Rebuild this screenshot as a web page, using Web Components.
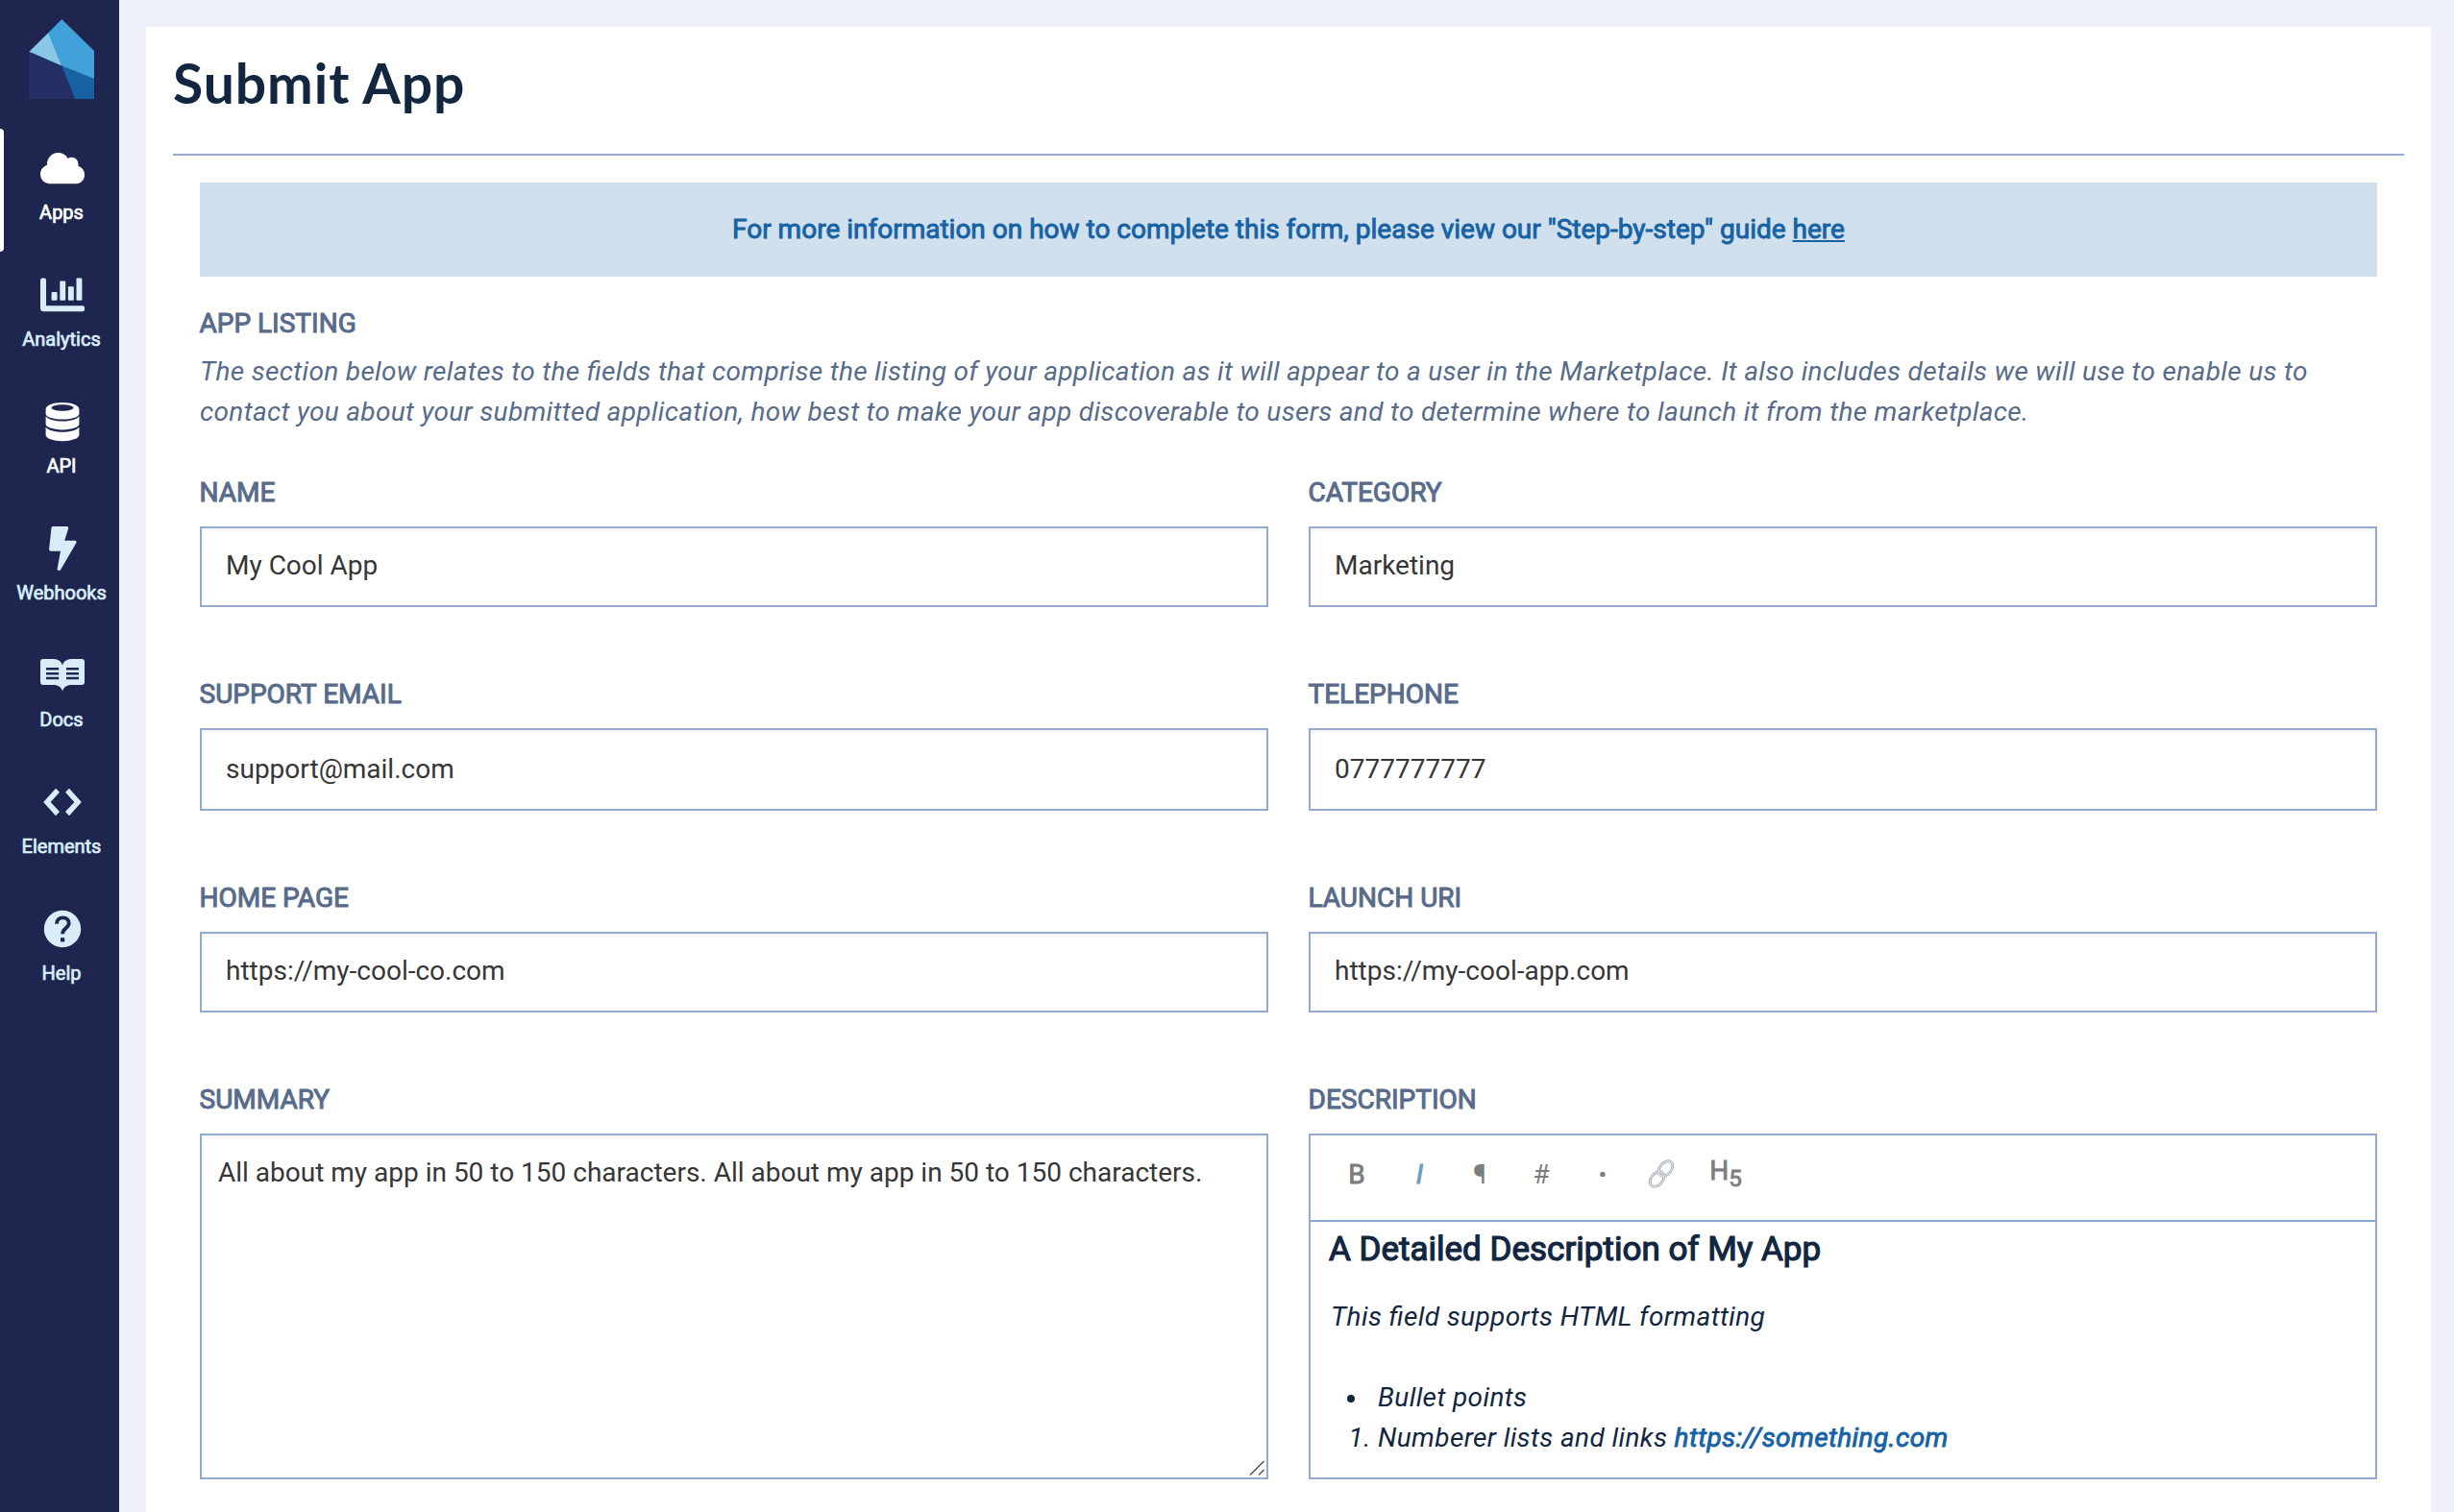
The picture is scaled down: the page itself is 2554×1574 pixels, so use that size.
<!DOCTYPE html>
<html lang="en">
<head>
<meta charset="utf-8">
<title>Submit App</title>
<style>
  html, body { margin: 0; height: 100%; }
  body { background: #eef1fa; font-family: Roboto, "Liberation Sans", sans-serif; font-size: 28px; line-height: 42px; color: #12263f; overflow: hidden; }
</style>
</head>
<body>
<app-shell>
  <side-nav slot="nav">
    <nav-item icon="cloud" active>Apps</nav-item>
    <nav-item icon="chart">Analytics</nav-item>
    <nav-item icon="database" bright>API</nav-item>
    <nav-item icon="bolt">Webhooks</nav-item>
    <nav-item icon="book">Docs</nav-item>
    <nav-item icon="code">Elements</nav-item>
    <nav-item icon="help">Help</nav-item>
  </side-nav>
  <page-panel heading="Submit App">
    <info-banner>For more information on how to complete this form, please view our "Step-by-step" guide <u>here</u></info-banner>
    <form-section heading="App Listing">
      <span slot="intro">The section below relates to the fields that comprise the listing of your application as it will appear to a user in the Marketplace. It also includes details we will use to enable us to contact you about your submitted application, how best to make your app discoverable to users and to determine where to launch it from the marketplace.</span>
      <form-field label="Name">My Cool App</form-field>
      <form-field label="Category">Marketing</form-field>
      <form-field label="Support Email" tall>support@mail.com</form-field>
      <form-field label="Telephone" tall>0777777777</form-field>
      <form-field label="Home Page">https://my-cool-co.com</form-field>
      <form-field label="Launch URI">https://my-cool-app.com</form-field>
      <form-field label="Summary" multiline>All about my app in 50 to 150 characters. All about my app in 50 to 150 characters.</form-field>
      <rich-editor label="Description"></rich-editor>
    </form-section>
  </page-panel>
</app-shell>

<script>
const define = (name, html, setup) => {
  const template = document.createElement('template');
  template.innerHTML = html;
  customElements.define(name, class extends HTMLElement {
    constructor() {
      super();
      this.attachShadow({ mode: 'open' }).append(template.content.cloneNode(true));
    }
    connectedCallback() { if (setup) setup(this, this.shadowRoot); }
  });
};

const icons = {
  cloud: '<path d="M10 40.2a9.5 9.5 0 0 1-9-9.7c0-4.600 2.600-8 6.900-9.400C7.700 14 12.500 8 19.500 8c4.600 0 8.300 2.400 10.200 6.100 1-.9 2.300-1.400 3.800-1.400 4.300 0 7 3.300 7 7.200v2.200c4 1.200 6.500 4.600 6.500 8.800 0 5.200-3.900 9.300-8.500 9.300z"/>',
  chart: '<path d="M1 8.600a2 2 0 0 1 2-2h2a2 2 0 0 1 2 2V35.300H45a2 2 0 0 1 2 2v2a2 2 0 0 1-2 2H4.500A3.500 3.500 0 0 1 1 37.800z"/><rect x="12.600" y="21" width="6" height="8.700" rx="1"/><rect x="21.300" y="9.400" width="5.900" height="20.300" rx="1"/><rect x="29.900" y="15.200" width="5.900" height="14.500" rx="1"/><rect x="38.500" y="6.600" width="5.900" height="23.100" rx="1"/>',
  database: '<path fill-rule="evenodd" d="M6.600 11C6.600 6.800 14.400 4 24 4s17.400 2.800 17.400 7v5c0 3-7.800 5.600-17.400 5.600S6.600 19 6.600 16zM24 6.300c-6.400 0-11.500 1.400-11.500 3.200S17.600 12.700 24 12.700 35.500 11.300 35.500 9.500 30.400 6.300 24 6.300z"/><path d="M6.600 18.600c3.400 3.600 9.800 5 17.400 5s14-1.400 17.400-5v8c0 3.200-7.800 5.800-17.400 5.800S6.600 29.800 6.600 26.600z"/><path d="M6.600 29.800c3.400 3.600 9.800 5 17.400 5s14-1.400 17.400-5v8c0 3.700-7.800 6.400-17.400 6.400S6.600 41.500 6.600 37.800z"/>',
  bolt: '<path d="M12.500 2.600C12.700 1.400 13.300 1 14.500 1h14c1.300 0 2 1 1.600 2.200L26.200 15.700h10.600c1.500 0 2.300 1.200 1.500 2.600L22.300 45.700c-.5.900-1.200 1.300-2 1.300-1.100 0-1.900-1-1.600-2.300l3.300-18H12c-1.300 0-2.100-.9-1.900-2.200z"/>',
  book: '<path fill-rule="evenodd" d="M24 13.500C22.700 8.500 18.500 6.900 13 6.900H4A3 3 0 0 0 1 9.900V31a3 3 0 0 0 3 3H13.500C19 34 22.500 35.500 24 40.500 25.500 35.500 29 34 34.500 34H44a3 3 0 0 0 3-3V9.900a3 3 0 0 0-3-3H35C29.500 6.900 25.300 8.500 24 13.500zM7 16h13.200v2.500H7zM7 20.900h13.200v2.500H7zM7 25.800h13.200v2.500H7zM28 16h13v2.500H28zM28 20.900h13v2.500H28zM28 25.800h13v2.500H28z"/>',
  code: '<path d="M17 9.700 4.200 24 17 38.200l4-4.100L11.600 24 21 13.800zM31 9.700 43.800 24 31 38.200l-4-4.100L36.400 24 27 13.800z"/>',
  help: '<circle cx="24" cy="24" r="19.200"/><path d="M18 18.700c0-4.300 2.900-6.400 6.400-6.400 3.700 0 6.300 2.200 6.300 5.700 0 5.200-6.600 5.400-6.600 11.200" fill="none" stroke="#1e2650" stroke-width="3.800"/><rect x="22" y="33.200" width="4.200" height="4.200" fill="#1e2650"/>'
};

define('app-shell', `
  <style>
    :host { display: flex; height: 100vh; }
    main { flex: 1; min-width: 0; padding: 28px 24px 0 28px; display: flex; }
  </style>
  <slot name="nav"></slot>
  <main><slot></slot></main>`);

define('side-nav', `
  <style>
    :host { display: flex; flex-direction: column; flex: none; width: 124px; background: #1e2650; }
    .logo { display: block; width: 68px; height: 84px; margin: 20px 0 28px 30px; }
  </style>
  <svg class="logo" viewBox="0 0 68 84">
    <path fill="#242f66" d="M0 33.500 34.300 48.400 48.300 83H0z"/>
    <path fill="#1762a3" d="M34.300 48.400 68 62v21H48.300z"/>
    <path fill="#41a2da" d="M34.300 0 68 33v29L34.300 48.400 20.400 14z"/>
    <path fill="#88c7e6" d="M20.400 14 34.300 48.400 .4 33.800z"/>
  </svg>
  <slot></slot>`);

define('nav-item', `
  <style>
    :host { display: flex; flex-direction: column; height: 132px; box-sizing: border-box; color: #d9edf8; border-left: 4px solid transparent; padding-top: 19px; align-items: center; font-size: 20px; line-height: 30px; -webkit-text-stroke: .7px; position: relative; }
    :host([active]), :host([bright]) { color: #fff; }
    :host([active])::before { content: ""; position: absolute; left: -4px; top: 2px; width: 4px; height: 128px; background: #fff; border-radius: 0 4px 4px 0; }
    svg { width: 48px; height: 48px; fill: currentColor; -webkit-text-stroke: 0; margin-left: 2px; flex: none; }
    span { margin-top: 7px; }
  </style>
  <svg viewBox="0 0 48 48"></svg>
  <span><slot></slot></span>`,
  (host, root) => { root.querySelector('svg').innerHTML = icons[host.getAttribute('icon')]; });

define('page-panel', `
  <style>
    :host { display: block; flex: 1; min-width: 0; background: #fff; padding: 0 28px; }
    h1 { margin: 0; height: 132px; box-sizing: border-box; font: 700 57px/68px Lato, "Liberation Sans", sans-serif; letter-spacing: .95px; padding-top: 24px; }
    .body { border-top: 2px solid #97aacb; padding: 28px; }
  </style>
  <h1></h1>
  <div class="body"><slot></slot></div>`,
  (host, root) => { root.querySelector('h1').textContent = host.getAttribute('heading'); });

define('info-banner', `
  <style>
    :host { display: block; padding: 28px; background: #d0e0ec; color: #1762a5; text-align: center; -webkit-text-stroke: .9px; margin-bottom: 28px; }
  </style>
  <slot></slot>`);

define('form-section', `
  <style>
    :host { display: block; }
    h2 { margin: 0 0 8px -.5px; font: inherit; color: #586b8a; text-transform: uppercase; -webkit-text-stroke: 1px; }
    p { margin: 0 0 42px; font-style: italic; letter-spacing: .325px; font-feature-settings: "liga" 1; color: #586b8a; }
    .grid { display: grid; grid-template-columns: 1fr 1fr; column-gap: 42px; row-gap: 70px; }
  </style>
  <h2></h2>
  <p><slot name="intro"></slot></p>
  <div class="grid"><slot></slot></div>`,
  (host, root) => { root.querySelector('h2').textContent = host.getAttribute('heading'); });

define('form-field', `
  <style>
    :host { display: block; }
    label { display: block; margin: 0 0 14px -.5px; color: #586b8a; text-transform: uppercase; -webkit-text-stroke: 1px; }
    .box { display: flow-root; position: relative; box-sizing: border-box; height: 84px; border: 2px solid #97aacb; padding: 18px 25px; color: #363636; box-shadow: inset 0 2px 4px rgba(10,10,10,.06); }
    :host([tall]) .box { height: 86px; padding-top: 20px; }
    :host([multiline]) .box { height: 360px; padding: 18px 17px; }
    svg { display: none; position: absolute; right: 1px; bottom: 1px; width: 18px; height: 18px; }
    :host([multiline]) svg { display: block; }
  </style>
  <label></label>
  <div class="box"><slot></slot><svg viewBox="0 0 18 18"><path d="M2 16.500 16.500 2M11 16.500 16.500 11" stroke="#555" stroke-width="1.500" fill="none"/></svg></div>`,
  (host, root) => { root.querySelector('label').textContent = host.getAttribute('label'); });

define('rich-editor', `
  <style>
    :host { display: block; }
    label { display: block; margin: 0 0 14px -.5px; color: #586b8a; text-transform: uppercase; -webkit-text-stroke: 1px; }
    .editor { box-sizing: border-box; height: 360px; border: 2px solid #97aacb; }
    .bar { display: flex; height: 88px; padding: 0 16px; border-bottom: 2px solid #83a9cf; color: #7d7d7d; }
    .bar span { width: 64px; height: 82px; display: flex; align-items: center; justify-content: center; }
    .bar b { font-weight: 400; -webkit-text-stroke: .9px; }
    .bar i { color: #6b9fb6; -webkit-text-stroke: 1px; margin-left: 3px; }
    .bar .dot { -webkit-text-stroke: 2.400px; }
    .bar svg { width: 30px; height: 30px; margin: -3px 7px 0 0; }
    .bar .h { -webkit-text-stroke: .8px; align-items: flex-start; }
    .h div { margin-top: 16px; }
    .h sub { font-size: 24px; line-height: 0; }
    .content { padding: 6px 20px 0 19px; font-style: italic; letter-spacing: .38px; font-feature-settings: "liga" 1; }
    h3 { margin: 0; font: 400 35px/46px Roboto, sans-serif; letter-spacing: 0; -webkit-text-stroke: 1.200px; }
    p { margin: 26px 0 42px 2px; }
    ul, ol { margin: 0; padding-left: 51px; }
    ul { list-style: none; }
    ul li::before { content: ""; display: inline-block; width: 8px; height: 8px; border-radius: 50%; background: currentColor; margin: 0 24px 4px -32px; vertical-align: baseline; }
    a { color: #1762a5; -webkit-text-stroke: .9px; }
  </style>
  <label></label>
  <div class="editor">
    <div class="bar">
      <span><b>B</b></span><span><i>I</i></span><span>¶</span><span>#</span><span class="dot">·</span>
      <span><svg viewBox="0 0 30 30" fill="none"><g stroke="#a0a4ac" stroke-width="2.800"><ellipse cx="19.500" cy="9.500" rx="8.800" ry="6" transform="rotate(-50 19.500 9.500)"/><ellipse cx="10.500" cy="20.500" rx="8.800" ry="6" transform="rotate(-50 10.500 20.500)"/></g><g stroke="#e3e9f1" stroke-width="1.200"><ellipse cx="19.500" cy="9.500" rx="8.800" ry="6" transform="rotate(-50 19.500 9.500)"/><ellipse cx="10.500" cy="20.500" rx="8.800" ry="6" transform="rotate(-50 10.500 20.500)"/></g></svg></span>
      <span class="h"><div>H<sub>5</sub></div></span>
    </div>
    <div class="content">
      <h3>A Detailed Description of My App</h3>
      <p>This field supports HTML formatting</p>
      <ul><li>Bullet points</li></ul>
      <ol><li>Numberer lists and links <a>https://something.com</a></li></ol>
    </div>
  </div>`,
  (host, root) => { root.querySelector('label').textContent = host.getAttribute('label'); });
</script>
</body>
</html>
